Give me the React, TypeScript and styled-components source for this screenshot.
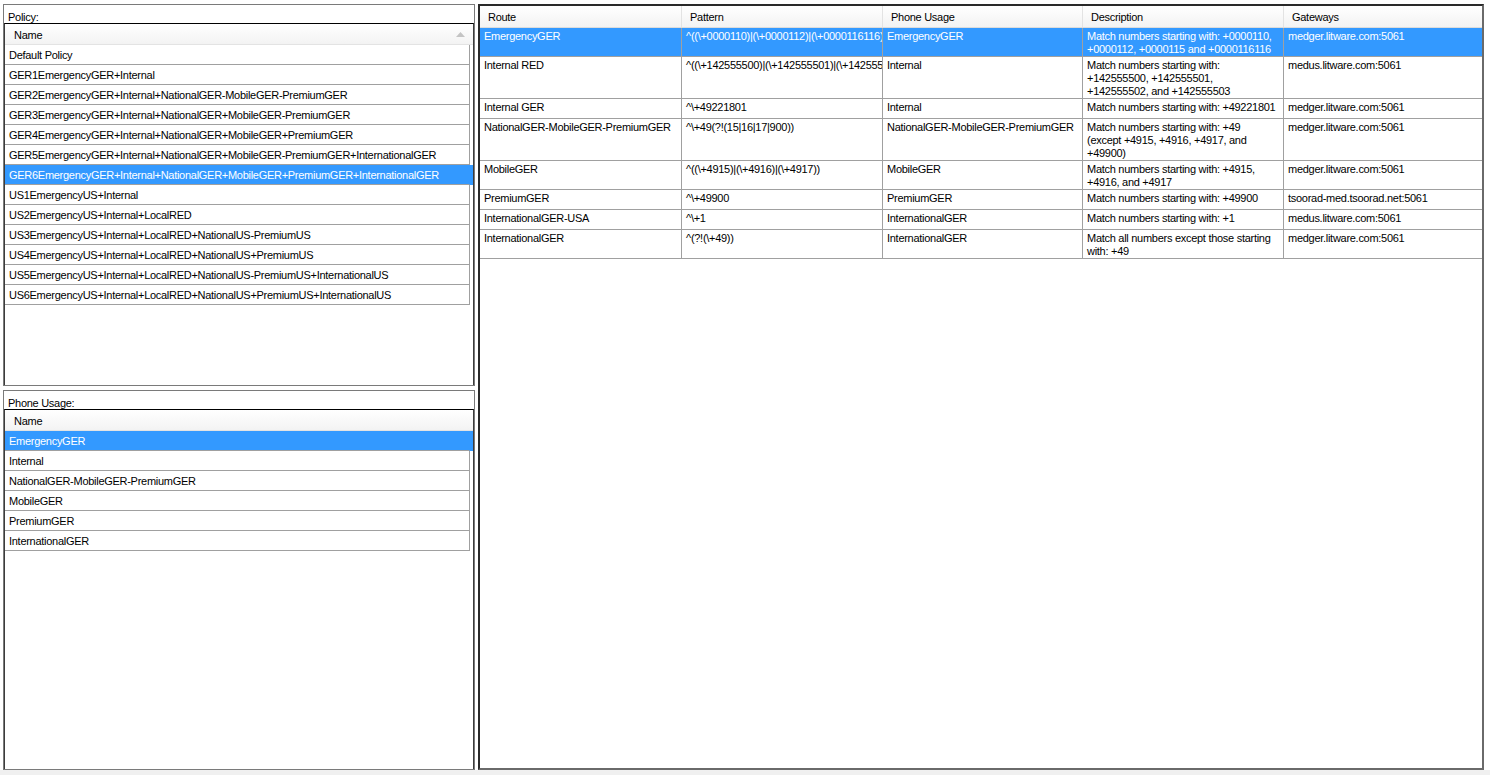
import React from 'react'
import styled, { createGlobalStyle } from 'styled-components'

const GlobalStyle = createGlobalStyle`
  html, body {
    margin: 0;
    padding: 0;
    background: #ffffff;
  }
  body {
    font-family: "Liberation Sans", Arial, sans-serif;
    font-size: 11px;
    letter-spacing: -0.28px;
    color: #000;
  }
`;

const Window = styled("div")`
  width: 1490px;
  height: 775px;
  display: flex;
  flex-direction: column;
  background: #ffffff;
`;

const Workspace = styled("div")`
  flex: 1;
  display: flex;
  gap: 3px;
  padding: 4px 6px 0 3px;
  min-height: 0;
`;

const LeftColumn = styled("div")`
  width: 472px;
  display: flex;
  flex-direction: column;
  gap: 4px;
`;

const GroupPanel = styled("div")<{ $height: number }>`
  height: ${p => p.$height}px;
  box-sizing: border-box;
  border: 1px solid #7a7a7a;
  display: flex;
  flex-direction: column;
  background: #fff;
`;

const PanelLabel = styled("div")`
  height: 18px;
  box-sizing: border-box;
  padding: 6px 0 0 4px;
  line-height: 12px;
`;

const ListGrid = styled("div")`
  flex: 1;
  border-top: 1px solid #000;
  border-left: 1px solid #3c3c3c;
  border-right: 1px solid #3c3c3c;
  overflow: hidden;
`;

const GridHeader = styled("div")`
  height: 21px;
  box-sizing: border-box;
  display: flex;
  align-items: center;
  justify-content: space-between;
  padding: 1px 8px 0 9px;
  background: linear-gradient(#ffffff, #f3f3f3);
  border-bottom: 1px solid #e3e3e3;
`;

const SortArrow = styled("svg")`
  width: 9px;
  height: 5px;
`;

const ListRow = styled("div")<{ $selected?: boolean }>`
  display: flex;
  height: 20px;
  background: ${p => (p.$selected ? "#3399ff" : "#fff")};
  color: ${p => (p.$selected ? "#fff" : "#000")};
`;

const ListCell = styled("div")<{ $selected?: boolean }>`
  width: 465px;
  height: 20px;
  box-sizing: border-box;
  padding: 1px 0 0 4px;
  line-height: 18px;
  white-space: nowrap;
  border-bottom: 1px solid #a0a0a0;
  border-right: 1px solid ${p => (p.$selected ? "#3399ff" : "#a0a0a0")};
`;

const RoutePanel = styled("div")`
  flex: 1;
  box-sizing: border-box;
  border-style: solid;
  border-width: 2px;
  border-color: #2a2a2a #6a6a6a #6a6a6a #2a2a2a;
  background: #fff;
  overflow: hidden;
`;

const TableHead = styled("div")`
  display: flex;
  height: 22px;
  box-sizing: border-box;
  background: linear-gradient(#ffffff, #f3f3f3);
  border-bottom: 1px solid #dcdcdc;
`;

const HeadCell = styled("div")<{ $width?: number }>`
  ${p => (p.$width ? `width: ${p.$width}px;` : "flex: 1;")}
  box-sizing: border-box;
  padding: 1px 0 0 8px;
  line-height: 21px;
  border-right: 1px solid #e3e3e3;
  &:last-child {
    border-right: none;
  }
`;

const TableRow = styled("div")<{ $selected?: boolean }>`
  display: flex;
  min-height: 20px;
  box-sizing: border-box;
  border-bottom: 1px solid #a0a0a0;
  background: ${p => (p.$selected ? "#3399ff" : "#fff")};
  color: ${p => (p.$selected ? "#fff" : "#000")};
`;

const Cell = styled("div")<{ $width?: number; $clip?: boolean }>`
  ${p => (p.$width ? `width: ${p.$width}px;` : "flex: 1;")}
  box-sizing: border-box;
  padding: 2px 3px 0 4px;
  line-height: 13px;
  border-right: 1px solid #a0a0a0;
  white-space: ${p => (p.$clip ? "nowrap" : "pre-line")};
  overflow: hidden;
  ${p => (p.$clip ? "padding-right: 0;" : "")}
  &:last-child {
    border-right: none;
  }
`;

const StatusStrip = styled("div")`
  height: 5px;
  background: #f0f0f0;
`;

const policies = [
  "Default Policy",
  "GER1EmergencyGER+Internal",
  "GER2EmergencyGER+Internal+NationalGER-MobileGER-PremiumGER",
  "GER3EmergencyGER+Internal+NationalGER+MobileGER-PremiumGER",
  "GER4EmergencyGER+Internal+NationalGER+MobileGER+PremiumGER",
  "GER5EmergencyGER+Internal+NationalGER+MobileGER-PremiumGER+InternationalGER",
  "GER6EmergencyGER+Internal+NationalGER+MobileGER+PremiumGER+InternationalGER",
  "US1EmergencyUS+Internal",
  "US2EmergencyUS+Internal+LocalRED",
  "US3EmergencyUS+Internal+LocalRED+NationalUS-PremiumUS",
  "US4EmergencyUS+Internal+LocalRED+NationalUS+PremiumUS",
  "US5EmergencyUS+Internal+LocalRED+NationalUS-PremiumUS+InternationalUS",
  "US6EmergencyUS+Internal+LocalRED+NationalUS+PremiumUS+InternationalUS",
];

const usages = [
  "EmergencyGER",
  "Internal",
  "NationalGER-MobileGER-PremiumGER",
  "MobileGER",
  "PremiumGER",
  "InternationalGER",
];

const columns = [
  { title: "Route", width: 202 },
  { title: "Pattern", width: 201 },
  { title: "Phone Usage", width: 200 },
  { title: "Description", width: 201 },
  { title: "Gateways" },
];

const routes = [
  {
    route: "EmergencyGER",
    pattern: String.raw`^((\+0000110)|(\+0000112)|(\+0000116116)|(\+0000115))`,
    usage: "EmergencyGER",
    description: "Match numbers starting with: +0000110,\n+0000112, +0000115 and +0000116116",
    gateway: "medger.litware.com:5061",
  },
  {
    route: "Internal RED",
    pattern: String.raw`^((\+142555500)|(\+142555501)|(\+142555502)|(\+142555503))`,
    usage: "Internal",
    description: "Match numbers starting with:\n+142555500, +142555501,\n+142555502, and +142555503",
    gateway: "medus.litware.com:5061",
  },
  {
    route: "Internal GER",
    pattern: String.raw`^\+49221801`,
    usage: "Internal",
    description: "Match numbers starting with: +49221801",
    gateway: "medger.litware.com:5061",
  },
  {
    route: "NationalGER-MobileGER-PremiumGER",
    pattern: String.raw`^\+49(?!(15|16|17|900))`,
    usage: "NationalGER-MobileGER-PremiumGER",
    description: "Match numbers starting with: +49\n(except +4915, +4916, +4917, and\n+49900)",
    gateway: "medger.litware.com:5061",
  },
  {
    route: "MobileGER",
    pattern: String.raw`^((\+4915)|(\+4916)|(\+4917))`,
    usage: "MobileGER",
    description: "Match numbers starting with: +4915,\n+4916, and +4917",
    gateway: "medger.litware.com:5061",
  },
  {
    route: "PremiumGER",
    pattern: String.raw`^\+49900`,
    usage: "PremiumGER",
    description: "Match numbers starting with: +49900",
    gateway: "tsoorad-med.tsoorad.net:5061",
  },
  {
    route: "InternationalGER-USA",
    pattern: String.raw`^\+1`,
    usage: "InternationalGER",
    description: "Match numbers starting with: +1",
    gateway: "medus.litware.com:5061",
  },
  {
    route: "InternationalGER",
    pattern: String.raw`^(?!(\+49))`,
    usage: "InternationalGER",
    description: "Match all numbers except those starting\nwith: +49",
    gateway: "medger.litware.com:5061",
  },
];

type ListProps = {
  label: string;
  items: string[];
  selected: number;
  height: number;
  sorted?: boolean;
};

const NameList = ({ label, items, selected, height, sorted }: ListProps) => (
  <GroupPanel $height={height}>
    <PanelLabel>{label}</PanelLabel>
    <ListGrid>
      <GridHeader>
        <span>Name</span>
        {sorted && (
          <SortArrow viewBox="0 0 9 5">
            <polygon points="4.5,0 9,5 0,5" fill="#c4c4c4" />
          </SortArrow>
        )}
      </GridHeader>
      {items.map((item, i) => (
        <ListRow key={item} $selected={i === selected}>
          <ListCell $selected={i === selected}>{item}</ListCell>
        </ListRow>
      ))}
    </ListGrid>
  </GroupPanel>
);

const App = () => {
  return (
    <Window>
      <GlobalStyle />
      <Workspace>
        <LeftColumn>
          <NameList label="Policy:" items={policies} selected={6} height={382} sorted />
          <NameList label="Phone Usage:" items={usages} selected={0} height={380} />
        </LeftColumn>
        <RoutePanel>
          <TableHead>
            {columns.map(c => (
              <HeadCell key={c.title} $width={c.width}>{c.title}</HeadCell>
            ))}
          </TableHead>
          {routes.map((r, i) => (
            <TableRow key={r.route} $selected={i === 0}>
              <Cell $width={202}>{r.route}</Cell>
              <Cell $width={201} $clip>{r.pattern}</Cell>
              <Cell $width={200}>{r.usage}</Cell>
              <Cell $width={201}>{r.description}</Cell>
              <Cell>{r.gateway}</Cell>
            </TableRow>
          ))}
        </RoutePanel>
      </Workspace>
      <StatusStrip />
    </Window>
  )
}

export default App
